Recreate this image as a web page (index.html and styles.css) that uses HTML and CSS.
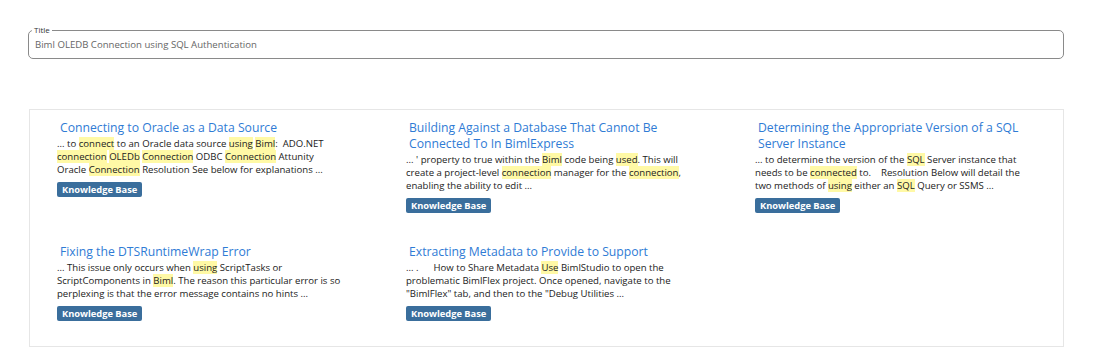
FILE: index.html
```html
<!DOCTYPE html>
<html>
<head>
<meta charset="utf-8">
<link rel="stylesheet" href="styles.css">
</head>
<body>
<div class="page">
  <fieldset class="field">
    <legend class="legend">Title</legend>
    <div class="field-value">Biml OLEDB Connection using SQL Authentication</div>
  </fieldset>

  <div class="results">
    <div class="item">
      <a class="item-title">Connecting to Oracle as a Data Source</a>
      <p class="item-text">... to <mark>connect</mark> to an Oracle data source <mark>using</mark> <mark>Biml</mark>:&nbsp; ADO.NET <mark>connection</mark> <mark>OLEDb</mark> <mark>Connection</mark> ODBC <mark>Connection</mark> Attunity Oracle <mark>Connection</mark> Resolution See below for explanations ...</p>
      <span class="tag">Knowledge Base</span>
    </div>
    <div class="item">
      <a class="item-title">Building Against a Database That Cannot Be Connected To In BimlExpress</a>
      <p class="item-text">... ' property to true within the <mark>Biml</mark> code being <mark>used</mark>. This will create a project-level <mark>connection</mark> manager for the <mark>connection</mark>, enabling the ability to edit ...</p>
      <span class="tag">Knowledge Base</span>
    </div>
    <div class="item">
      <a class="item-title">Determining the Appropriate Version of a SQL Server Instance</a>
      <p class="item-text">... to determine the version of the <mark>SQL</mark> Server instance that needs to be <mark>connected</mark> to.&nbsp;&nbsp;&nbsp; Resolution Below will detail the two methods of <mark>using</mark> either an <mark>SQL</mark> Query or SSMS ...</p>
      <span class="tag">Knowledge Base</span>
    </div>
    <div class="item">
      <a class="item-title">Fixing the DTSRuntimeWrap Error</a>
      <p class="item-text">... This issue only occurs when <mark>using</mark> ScriptTasks or ScriptComponents in <mark>Biml</mark>. The reason this particular error is so perplexing is that the error message contains no hints ...</p>
      <span class="tag">Knowledge Base</span>
    </div>
    <div class="item">
      <a class="item-title">Extracting Metadata to Provide to Support</a>
      <p class="item-text">... .&nbsp;&nbsp;&nbsp;&nbsp;&nbsp; How to Share Metadata <mark>Use</mark> BimlStudio to open the problematic BimlFlex project. Once opened, navigate to the "BimlFlex" tab, and then to the "Debug Utilities ...</p>
      <span class="tag">Knowledge Base</span>
    </div>
  </div>
</div>
</body>
</html>
```

FILE: styles.css
```css
* { box-sizing: border-box; }
html, body { margin: 0; padding: 0; background: #fff; }
body {
  font-family: "Open Sans", "Noto Sans", sans-serif;
  color: #222;
}
.page {
  padding: 25px 34px 0 28px;
}
.field {
  margin: 0;
  border: 1px solid #8a8a8a;
  border-radius: 5px;
  padding: 4px 6px 7px 6px;
  height: 34px;
}
.legend {
  font-size: 8px;
  color: #333;
  padding: 0 2px;
  margin-left: -3px;
  line-height: 10px;
}
.field-value {
  font-size: 9.6px;
  color: #666;
  line-height: 14px;
  margin-top: -1px;
}
.results {
  margin-top: 50px;
  margin-left: 1px;
  border: 1px solid #e6e6e6;
  padding: 10px 0 24px 27px;
  display: grid;
  grid-template-columns: 349px 349px 272px;
  row-gap: 30px;
}
.item {
  max-width: 287px;
}
.item-title {
  display: block;
  color: #2f7bd5;
  font-size: 12.2px;
  line-height: 16px;
  padding-left: 3px;
  margin-bottom: 1px;
}
.item-text {
  margin: 0;
  font-size: 9.6px;
  line-height: 13px;
  color: #222;
}
mark {
  background: #fff9a6;
  color: inherit;
}
.tag {
  display: inline-block;
  margin-top: 2px;
  background: #3a6e9c;
  color: #fff;
  font-weight: 700;
  font-size: 9.3px;
  line-height: 15px;
  padding: 0 5px;
  border-radius: 2px;
}
```
